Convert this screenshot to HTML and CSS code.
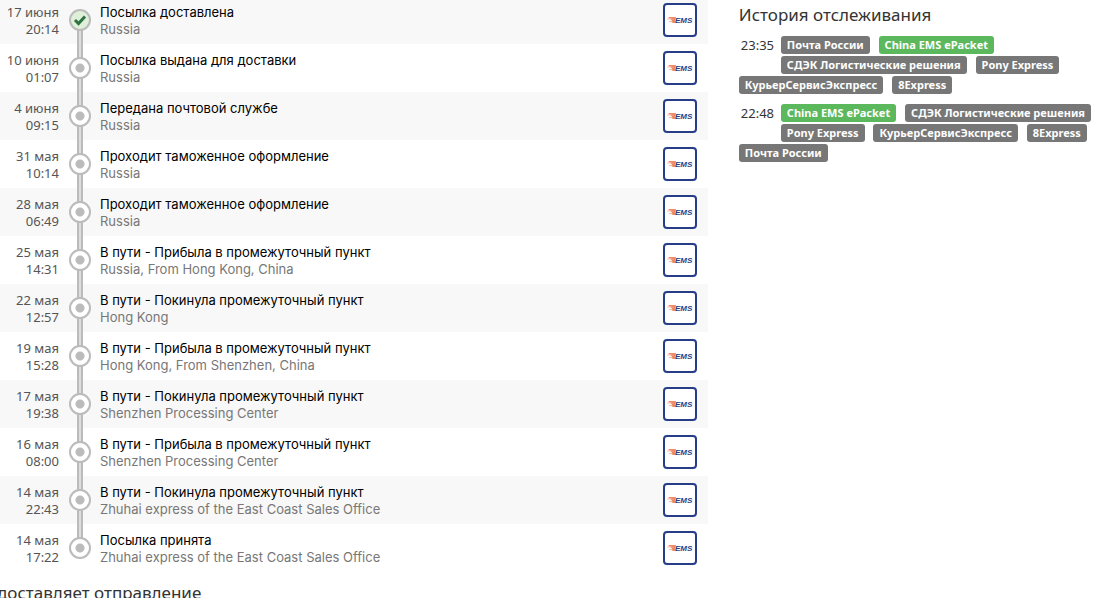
FILE: index.html
```html
<!DOCTYPE html>
<html lang="ru">

<head>
    <meta charset="UTF-8">
    <title>История отслеживания</title>
    <link rel="stylesheet" href="styles.css">
</head>

<body>
    <!-- EMS logo, reused in every row -->
    <svg class="defs" width="0" height="0" aria-hidden="true">
        <symbol id="ems" viewBox="0 0 34 34">
            <rect x="1" y="1" width="32" height="32" rx="3" fill="#fff" stroke="#253e85" stroke-width="2" />
            <path d="M5 14h8l-1 6h-2.500l-1-3z" fill="#f08a63" />
            <path d="M4.500 16h5M6 18.500h3" stroke="#f6b59b" stroke-width="1" />
            <text x="12" y="20" class="ems-text">EMS</text>
        </symbol>
    </svg>

    <div class="page">
        <main>
            <ul class="events">
                <li class="event done">
                    <div class="date">17 июня<br>20:14</div>
                    <div class="marker"><span class="dot"><svg width="18" height="18" viewBox="0 0 18 18"><path d="M4 9l3.500 3.500L14 5.500" fill="none" stroke="#2f7242" stroke-width="3" /></svg></span></div>
                    <div class="info">Посылка доставлена<br><span class="place">Russia</span></div>
                    <svg class="logo" role="img" aria-label="EMS"><use href="#ems" /></svg>
                </li>
                <li class="event">
                    <div class="date">10 июня<br>01:07</div>
                    <div class="marker"><span class="dot"></span></div>
                    <div class="info">Посылка выдана для доставки<br><span class="place">Russia</span></div>
                    <svg class="logo" role="img" aria-label="EMS"><use href="#ems" /></svg>
                </li>
                <li class="event">
                    <div class="date">4 июня<br>09:15</div>
                    <div class="marker"><span class="dot"></span></div>
                    <div class="info">Передана почтовой службе<br><span class="place">Russia</span></div>
                    <svg class="logo" role="img" aria-label="EMS"><use href="#ems" /></svg>
                </li>
                <li class="event">
                    <div class="date">31 мая<br>10:14</div>
                    <div class="marker"><span class="dot"></span></div>
                    <div class="info">Проходит таможенное оформление<br><span class="place">Russia</span></div>
                    <svg class="logo" role="img" aria-label="EMS"><use href="#ems" /></svg>
                </li>
                <li class="event">
                    <div class="date">28 мая<br>06:49</div>
                    <div class="marker"><span class="dot"></span></div>
                    <div class="info">Проходит таможенное оформление<br><span class="place">Russia</span></div>
                    <svg class="logo" role="img" aria-label="EMS"><use href="#ems" /></svg>
                </li>
                <li class="event">
                    <div class="date">25 мая<br>14:31</div>
                    <div class="marker"><span class="dot"></span></div>
                    <div class="info">В пути - Прибыла в промежуточный пункт<br><span class="place">Russia, From Hong Kong, China</span></div>
                    <svg class="logo" role="img" aria-label="EMS"><use href="#ems" /></svg>
                </li>
                <li class="event">
                    <div class="date">22 мая<br>12:57</div>
                    <div class="marker"><span class="dot"></span></div>
                    <div class="info">В пути - Покинула промежуточный пункт<br><span class="place">Hong Kong</span></div>
                    <svg class="logo" role="img" aria-label="EMS"><use href="#ems" /></svg>
                </li>
                <li class="event">
                    <div class="date">19 мая<br>15:28</div>
                    <div class="marker"><span class="dot"></span></div>
                    <div class="info">В пути - Прибыла в промежуточный пункт<br><span class="place">Hong Kong, From Shenzhen, China</span></div>
                    <svg class="logo" role="img" aria-label="EMS"><use href="#ems" /></svg>
                </li>
                <li class="event">
                    <div class="date">17 мая<br>19:38</div>
                    <div class="marker"><span class="dot"></span></div>
                    <div class="info">В пути - Покинула промежуточный пункт<br><span class="place">Shenzhen Processing Center</span></div>
                    <svg class="logo" role="img" aria-label="EMS"><use href="#ems" /></svg>
                </li>
                <li class="event">
                    <div class="date">16 мая<br>08:00</div>
                    <div class="marker"><span class="dot"></span></div>
                    <div class="info">В пути - Прибыла в промежуточный пункт<br><span class="place">Shenzhen Processing Center</span></div>
                    <svg class="logo" role="img" aria-label="EMS"><use href="#ems" /></svg>
                </li>
                <li class="event">
                    <div class="date">14 мая<br>22:43</div>
                    <div class="marker"><span class="dot"></span></div>
                    <div class="info">В пути - Покинула промежуточный пункт<br><span class="place">Zhuhai express of the East Coast Sales Office</span></div>
                    <svg class="logo" role="img" aria-label="EMS"><use href="#ems" /></svg>
                </li>
                <li class="event">
                    <div class="date">14 мая<br>17:22</div>
                    <div class="marker"><span class="dot"></span></div>
                    <div class="info">Посылка принята<br><span class="place">Zhuhai express of the East Coast Sales Office</span></div>
                    <svg class="logo" role="img" aria-label="EMS"><use href="#ems" /></svg>
                </li>
            </ul>
            <h2 class="carrier-title">доставляет отправление</h2>
        </main>

        <aside>
            <h2>История отслеживания</h2>
            <div class="check">
                <span class="time">23:35</span>
                <span class="label">Почта России</span>
                <span class="label found">China EMS ePacket</span>
                <span class="label">СДЭК Логистические решения</span>
                <span class="label">Pony Express</span>
                <span class="label">КурьерСервисЭкспресс</span>
                <span class="label">8Express</span>
            </div>
            <div class="check">
                <span class="time">22:48</span>
                <span class="label found">China EMS ePacket</span>
                <span class="label">СДЭК Логистические решения</span>
                <span class="label">Pony Express</span>
                <span class="label">КурьерСервисЭкспресс</span>
                <span class="label">8Express</span>
                <span class="label">Почта России</span>
            </div>
        </aside>
    </div>
</body>

</html>
```

FILE: styles.css
```css
body {
    margin: 0;
    overflow: hidden;
    background: #fff;
    color: #000;
    font-family: "Noto Sans", sans-serif;
    font-size: 13px;
    line-height: 17px;
}

.defs {
    position: absolute;
}

.ems-text {
    font: italic bold 8px "Liberation Sans", sans-serif;
    fill: #253e85;
}

.page {
    display: grid;
    grid-template-columns: 64% 1fr;
}

h2 {
    margin: 0;
    color: #333;
    font-size: 17px;
    font-weight: normal;
    line-height: 22px;
}

/* timeline */
.events {
    margin: -4px 0 0;
    padding: 0;
    list-style: none;
}

.event {
    display: grid;
    grid-template-columns: 60px 40px 1fr 34px;
    align-items: center;
    height: 48px;
    padding-right: 11px;
}

.event:nth-child(odd) {
    background: #f8f8f8;
}

.date {
    padding: 2px 1px 0 0;
    color: #555;
    text-align: right;
}

.info {
    padding-top: 2px;
    font-family: Inter, sans-serif;
}

.marker {
    position: relative;
    display: flex;
    align-items: center;
    justify-content: center;
    height: 48px;
}

/* rail that joins the dots */
.marker::before {
    content: "";
    position: absolute;
    top: 0;
    bottom: 0;
    width: 2px;
    border: solid #bbb;
    border-width: 0 2px;
    background: #ddd;
}

.event:first-child .marker::before {
    top: 24px;
}

.event:last-child .marker::before {
    bottom: 24px;
}

.dot {
    position: relative;
    box-sizing: border-box;
    width: 22px;
    height: 22px;
    border: 2px solid #bbb;
    border-radius: 50%;
    background: radial-gradient(circle, #bbb 4px, #fff 5px);
}

.done .dot {
    background: #dff0d8;
}

.dot svg {
    display: block;
}

.place {
    color: #777;
}

.logo {
    width: 34px;
    height: 34px;
}

.carrier-title {
    margin-top: 10px;
    margin-left: -3px;
}

/* check history */
aside {
    padding: 4px 4px 0 31px;
}

.check {
    margin-top: 9px;
    margin-bottom: 8px;
    font-size: 11px;
    line-height: 20px;
}

.check + .check {
    margin-top: 0;
}

.time {
    float: left;
    width: 40px;
    height: 21px;
    padding-left: 2px;
    color: #333;
    font-size: 13px;
}

.label {
    display: inline-block;
    margin: 1px 6px 1px 0;
    padding: 0 6px;
    border-radius: 3px;
    background: #777;
    color: #fff;
    font-weight: bold;
    line-height: 18px;
    vertical-align: top;
}

.found {
    background: #5cb85c;
}
```
